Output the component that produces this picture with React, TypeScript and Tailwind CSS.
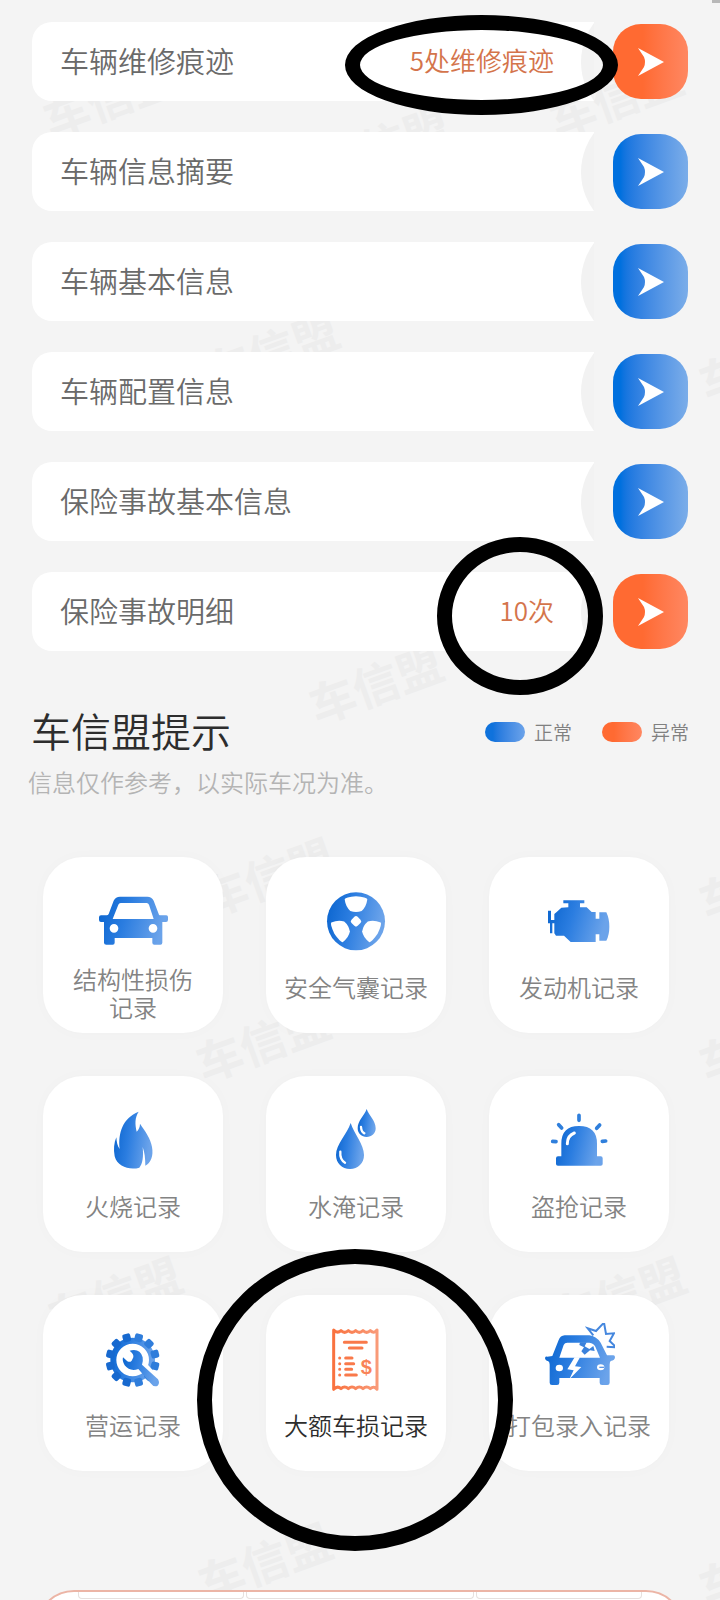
import React from "react";

const BLUE = "url(#blue)";
const ORANGE = "url(#orange)";

type Status = "normal" | "abnormal";

const rows: { label: string; value?: string; status: Status }[] = [
  { label: "车辆维修痕迹", value: "5处维修痕迹", status: "abnormal" },
  { label: "车辆信息摘要", status: "normal" },
  { label: "车辆基本信息", status: "normal" },
  { label: "车辆配置信息", status: "normal" },
  { label: "保险事故基本信息", status: "normal" },
  { label: "保险事故明细", value: "10次", status: "abnormal" },
];

function Gradients() {
  return (
    <svg className="absolute size-0" aria-hidden="true">
      <defs>
        <linearGradient id="blue" x1="0" y1="0" x2="1" y2="0.2">
          <stop offset="0.1" stopColor="#1069d2" />
          <stop offset="0.45" stopColor="#2b7de0" />
          <stop offset="1" stopColor="#6ba3ea" />
        </linearGradient>
        <linearGradient id="orange" x1="0" y1="0" x2="1" y2="0">
          <stop offset="0" stopColor="#f9723f" />
          <stop offset="1" stopColor="#f99a78" />
        </linearGradient>
      </defs>
    </svg>
  );
}

function Icon({ viewBox, children }: { viewBox: string; children: React.ReactNode }) {
  return (
    <svg viewBox={viewBox} className="size-[72px]" aria-hidden="true">
      {children}
    </svg>
  );
}

const CarIcon = () => (
  <Icon viewBox="201 135 216 216">
    <path
      fill={BLUE}
      fillRule="evenodd"
      d="M270 170H352Q365 170 371 182L387 224Q388 226 393 226H409Q414 226 414 231V239Q414 246 408 246H397V308Q397 314 391 314H373Q367 314 367 308V294H254V308Q254 314 248 314H229Q222 314 222 308V246H213Q207 246 207 240V232Q207 226 213 226H230Q234 226 236 222L251 182Q257 170 270 170ZM272 189Q267 189 265 194L248 237H371L357 194Q355 189 350 189ZM239 265a13 13 0 1 0 26 0a13 13 0 1 0 -26 0ZM356 265a13 13 0 1 0 26 0a13 13 0 1 0 -26 0Z"
    />
  </Icon>
);

const wedge = "M74 43Q76 37 108 34Q140 37 142 43Q139 66 125 78Q108 84 91 78Q77 66 74 43Z";

const AirbagIcon = () => (
  <Icon viewBox="0 0 216 216">
    <circle cx="108" cy="109" r="87" fill={BLUE} />
    <g fill="#fff">
      <path d={wedge} />
      <path d={wedge} transform="rotate(120 108 109)" />
      <path d={wedge} transform="rotate(240 108 109)" />
      <rect x="95" y="96" width="26" height="26" rx="7" transform="rotate(45 108 109)" />
    </g>
  </Icon>
);

const EngineIcon = () => (
  <Icon viewBox="549 135 216 216">
    <path
      fill={BLUE}
      d="M610 181H673V190H660V202H680L695 216H707V236H718V217H739Q748 236 748 260Q748 285 739 302H718V283H707V306H632L612 287H588L583 280V250H577V280H570V250H564V212H573V240H583V222L590 216L604 203L625 202V190H610Z"
    />
  </Icon>
);

const FireIcon = () => (
  <Icon viewBox="201 105 216 216">
    <path
      fill={BLUE}
      d="M326 128C314 147 315 165 320 188C326 182 330 174 330 164C346 188 362 208 366 234C371 262 362 282 346 290C346 268 344 250 338 234C341 262 338 285 328 296C300 304 262 294 254 262C250 240 252 222 259 205C260 220 262 230 269 240C264 190 278 148 326 128Z"
    />
  </Icon>
);

const WaterIcon = () => (
  <Icon viewBox="873 105 216 216">
    <path
      fill={BLUE}
      d="M965 162C975 195 1005 225 1005 258C1005 283 987 300 963 300C939 300 921 283 921 258C921 225 955 195 965 162Z"
    />
    <path
      fill={BLUE}
      d="M1013 120C1020 140 1040 155 1040 178C1040 194 1028 204 1013 204C998 204 986 194 986 178C986 155 1006 140 1013 120Z"
    />
    <path d="M934 248Q932 272 948 281M996 174Q997 189 1006 193" fill="none" stroke="#fff" strokeWidth="7" strokeLinecap="round" />
  </Icon>
);

const SirenIcon = () => (
  <Icon viewBox="549 105 216 216">
    <path
      fill={BLUE}
      d="M604 262V224Q604 171 657 171Q711 171 711 224V262H722Q728 262 728 268V285Q728 290 722 290H594Q588 290 588 285V268Q588 262 594 262Z"
    />
    <path d="M622 224Q622 200 643 192" fill="none" stroke="#fff" strokeWidth="9" strokeLinecap="round" />
    <path
      d="M657 139V154M596 167L605 177M719 168L710 178M578 217L588 218M737 216L727 217"
      fill="none"
      stroke="#2f7fdc"
      strokeWidth="11"
      strokeLinecap="round"
    />
  </Icon>
);

const teeth = Array.from({ length: 12 }, (_, i) => i * 30 + 15);

const GearIcon = () => (
  <Icon viewBox="201 249 216 216">
    <path
      fill={BLUE}
      fillRule="evenodd"
      d="M241 360a67 67 0 1 0 134 0a67 67 0 1 0 -134 0ZM259 360a49 49 0 1 0 98 0a49 49 0 1 0 -98 0Z"
    />
    {teeth.map((a) => (
      <rect
        key={a}
        x="296"
        y="279"
        width="24"
        height="24"
        rx="6"
        fill={a < 180 ? "#2f7ddb" : "#1769cf"}
        transform={`rotate(${a} 308 360)`}
      />
    ))}
    <path d="M338 376L384 428" stroke="#fff" strokeWidth="26" />
    <path
      fill={BLUE}
      d="M299 332Q330 324 338 352Q340 364 336 374L384 418Q391 430 382 438Q370 442 362 430L325 387Q300 396 284 376Q276 362 279 352L292 364Q300 368 305 362L310 352Q312 342 299 332Z"
    />
  </Icon>
);

const ReceiptIcon = () => (
  <Icon viewBox="873 249 216 216">
    <g fill="none" stroke={ORANGE} strokeLinecap="round">
      <path
        strokeWidth="9"
        strokeLinejoin="round"
        d="M914 270Q925 282 936 272Q947 282 958 272Q969 282 980 272Q991 282 1002 272Q1013 282 1024 272Q1035 282 1044 270V448Q1035 436 1024 446Q1013 436 1002 446Q991 436 980 446Q969 436 958 446Q947 436 936 446Q925 436 914 448Z"
      />
    </g>
    <g stroke="#f9794a" strokeWidth="9" strokeLinecap="round">
      <path d="M946 307L1012 307M961 324L999 324M950 354L969 354M950 371L974 371M950 388L968 388M950 405L982 405" />
      <path d="M932 354h0.1M932 371h0.1M932 388h0.1M932 405h0.1" />
    </g>
    <text x="1012" y="401" textAnchor="middle" fontFamily="Liberation Sans, sans-serif" fontWeight="700" fontSize="60" fill="#f98358">
      $
    </text>
  </Icon>
);

const CrashIcon = () => (
  <Icon viewBox="549 249 216 216">
    <path
      fill={BLUE}
      fillRule="evenodd"
      d="M614 286H688Q708 288 722 308L741 346H760Q765 346 765 352Q765 361 752 363Q749 366 749 374V428Q749 435 742 435H726Q719 435 719 428V414H598V428Q598 435 591 435H576Q569 435 569 428V374Q569 366 565 364Q555 361 555 354Q556 349 562 350L577 348L596 300Q601 287 614 286ZM622 308Q614 308 611 315L598 353H720L706 320Q701 309 688 308ZM587 384a11 10 0 1 0 22 0a11 10 0 1 0 -22 0ZM711 382a11 9 0 1 0 22 0a11 9 0 1 0 -22 0Z"
    />
    <path d="M644 352L622 388L641 391L628 418L664 381L645 379L660 352Z" fill="#fff" />
    <path d="M660 307H680L674 319L688 327L700 318L704 333L690 331L674 344L664 334L672 322L658 315Z" fill="#3b82dc" />
    <path d="M718 382H732" stroke="#5b96e3" strokeWidth="4" />
    <path
      d="M683 265L708 273L732 248L738 282L762 280L749 303L769 322L740 320"
      fill="#fff"
      stroke="#fff"
      strokeWidth="18"
    />
    <path
      d="M700 286L683 265L708 273L732 248L738 282L762 280L749 303L769 322L740 320"
      fill="none"
      stroke="#4587de"
      strokeWidth="6"
    />
  </Icon>
);

const records: { label: string; icon: React.ReactNode; alert?: boolean }[] = [
  { label: "结构性损伤\n记录", icon: <CarIcon /> },
  { label: "安全气囊记录", icon: <AirbagIcon /> },
  { label: "发动机记录", icon: <EngineIcon /> },
  { label: "火烧记录", icon: <FireIcon /> },
  { label: "水淹记录", icon: <WaterIcon /> },
  { label: "盗抢记录", icon: <SirenIcon /> },
  { label: "营运记录", icon: <GearIcon /> },
  { label: "大额车损记录", icon: <ReceiptIcon />, alert: true },
  { label: "打包录入记录", icon: <CrashIcon /> },
];

const watermarks = [
  [109, 96],
  [382, 143],
  [615, 96],
  [271, 349],
  [765, 359],
  [375, 682],
  [267, 875],
  [765, 878],
  [262, 1040],
  [765, 1040],
  [114, 1294],
  [618, 1294],
  [264, 1560],
  [765, 1564],
];

function Watermarks() {
  return (
    <div className="pointer-events-none absolute inset-0 overflow-hidden" aria-hidden="true">
      {watermarks.map(([x, y]) => (
        <span
          key={`${x}-${y}`}
          className="absolute -translate-x-1/2 -translate-y-1/2 -rotate-20 text-[46px] leading-none font-bold whitespace-nowrap text-[#ededed]"
          style={{ left: x, top: y }}
        >
          车信盟
        </span>
      ))}
    </div>
  );
}

function RowItem({ label, value, status }: { label: string; value?: string; status: Status }) {
  return (
    <li className="flex items-center gap-[19px]">
      <div className="relative flex h-[79px] flex-1 items-center justify-between overflow-hidden rounded-l-[20px] bg-white pr-10 pb-1 pl-7">
        <span className="text-[29px] leading-10 text-[#6a6a6a]">{label}</span>
        {value && <span className="text-[26px] leading-10 text-[#d4744b]">{value}</span>}
        <span className="absolute top-1/2 -right-[117px] size-[130px] -translate-y-1/2 rounded-full bg-[#f2f2f2]" />
      </div>
      <button
        type="button"
        aria-label={label}
        className={
          status === "abnormal"
            ? "flex size-[75px] items-center justify-center rounded-[28px] bg-linear-to-r from-[#ff6a32] from-40% to-[#ff8761]"
            : "flex size-[75px] items-center justify-center rounded-[28px] bg-linear-to-r from-[#0070de] from-10% to-[#7bade9]"
        }
      >
        <svg viewBox="0 0 27 28" className="h-7 w-[27px]" aria-hidden="true">
          <path d="M1 0L27 14L1 28L7 19Q9 14 7 9Z" fill="#fff" />
        </svg>
      </button>
    </li>
  );
}

export default function App() {
  return (
    <div className="relative min-h-screen overflow-hidden bg-[#f4f4f4] font-['Noto_Sans_CJK_SC',sans-serif] font-[350]">
      <Gradients />
      <Watermarks />
      <div className="absolute top-0 right-0 h-[3px] w-2 bg-[#b8b8b8]" />

      <main className="relative">
        <ul className="flex flex-col gap-[31px] px-8 pt-[22px]">
          {rows.map((r) => (
            <RowItem key={r.label} {...r} />
          ))}
        </ul>

        <header className="px-[31px] pt-[49px]">
          <div className="flex items-center justify-between">
            <h1 className="text-[40px] leading-[60px] text-[#2d2d2d]">车信盟提示</h1>
            <div className="flex gap-[30px] pt-1 text-[19px] leading-7 text-[#808080]">
              <span className="flex items-center gap-[9px]">
                <span className="h-5 w-10 rounded-full bg-linear-to-r from-[#0f72dc] from-20% to-[#6ba3ea]" />
                正常
              </span>
              <span className="flex items-center gap-[9px]">
                <span className="h-5 w-10 rounded-full bg-linear-to-r from-[#ff6a32] from-30% to-[#ff8761]" />
                异常
              </span>
            </div>
          </div>
          <p className="-ml-[3px] pt-1 text-[24px] leading-9 text-[#b4b4b4]">信息仅作参考，以实际车况为准。</p>
        </header>

        <section className="grid grid-cols-3 gap-[43px] pt-[57px] pr-[51px] pl-[43px]">
          {records.map((r) => (
            <button
              key={r.label}
              type="button"
              className="flex min-h-[176px] flex-col items-center justify-start rounded-[40px] bg-white px-[18px] pt-7 pb-[10px] shadow-[0_0_16px_rgba(0,0,0,0.02)]"
            >
              {r.icon}
              <span className="mt-2 flex min-h-11 items-center justify-center">
                <span
                  className={
                    r.alert
                      ? "text-center text-[24px] leading-7 whitespace-pre-line text-[#2d2d2d]"
                      : "text-center text-[24px] leading-7 whitespace-pre-line text-[#838383]"
                  }
                >
                  {r.label}
                </span>
              </span>
            </button>
          ))}
        </section>

        <section className="mt-[119px] h-[10px] overflow-hidden px-9">
          <div className="h-20 rounded-t-[38px] border-2 border-[#ecb5a6] bg-white px-10">
            <div className="grid grid-cols-[165fr_228fr_165fr] gap-0.5">
              <div className="h-[7px] rounded-b border border-t-0 border-[#e6e0de]" />
              <div className="h-[7px] rounded-b border border-t-0 border-[#e6e0de]" />
              <div className="h-[7px] rounded-b border border-t-0 border-[#e6e0de]" />
            </div>
          </div>
        </section>
      </main>

      <div className="pointer-events-none absolute top-[15px] left-[345px] h-[100px] w-[273px] rounded-[50%] border-[15px] border-black" />
      <div className="pointer-events-none absolute top-[537px] left-[437px] h-[158px] w-[166px] rounded-[50%] border-[15px] border-black" />
      <div className="pointer-events-none absolute top-[1249px] left-[197px] h-[302px] w-[316px] rounded-[50%] border-[15px] border-black" />
    </div>
  );
}
